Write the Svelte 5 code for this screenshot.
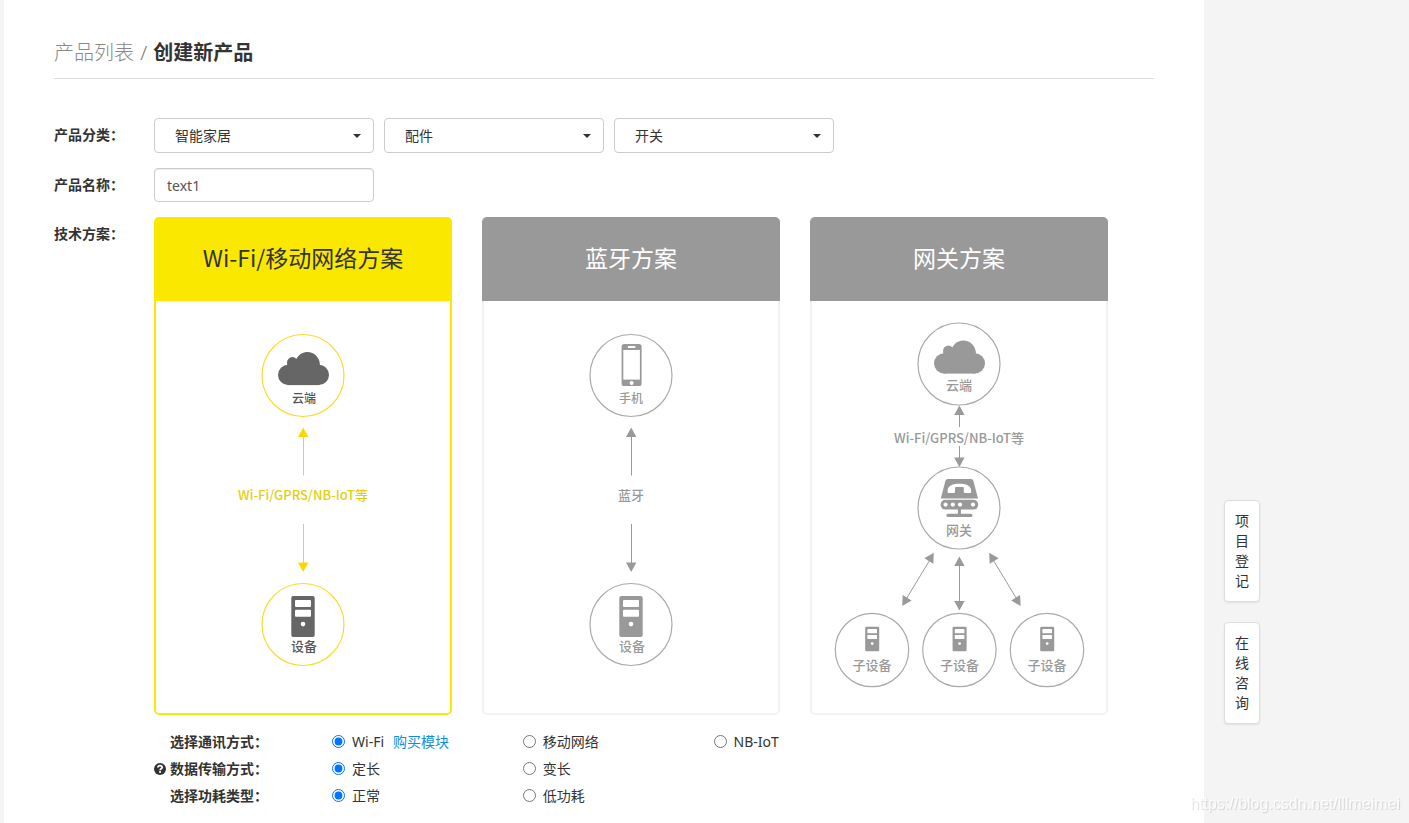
<script>
  const categories = [
    { id: 'cat-main', label: '产品大类', value: '智能家居' },
    { id: 'cat-sub', label: '产品中类', value: '配件' },
    { id: 'cat-type', label: '产品小类', value: '开关' }
  ];

  const plans = [
    { id: 'wifi', title: 'Wi-Fi/移动网络方案' },
    { id: 'ble', title: '蓝牙方案' },
    { id: 'gateway', title: '网关方案' }
  ];

  const settings = [
    { name: 'comm', label: '选择通讯方式：', help: false, options: ['Wi-Fi', '移动网络', 'NB-IoT'] },
    { name: 'transfer', label: '数据传输方式：', help: true, options: ['定长', '变长'] },
    { name: 'power', label: '选择功耗类型：', help: false, options: ['正常', '低功耗'] }
  ];

  let productName = $state('text1');
  let plan = $state('wifi');
  let chosen = $state({ comm: 'Wi-Fi', transfer: '定长', power: '正常' });
</script>

{#snippet head(x, y, angle)}
  <path class="solid" d="M0 0L5.2 9.6H-5.2Z" transform="translate({x} {y}) rotate({angle})" />
{/snippet}

{#snippet cloud(x, y)}
  <g class="icon" transform="translate({x} {y})">
    <circle cx="-15.2" cy="-0.6" r="10.2" />
    <circle cx="15.4" cy="-0.6" r="10.2" />
    <circle cx="4" cy="-11" r="12.4" />
    <circle cx="-11" cy="-13" r="5.4" />
    <rect x="-16" y="-12" width="32" height="21.6" />
  </g>
{/snippet}

{#snippet server(x, y, scale)}
  <g class="icon" transform="translate({x} {y}) scale({scale})">
    <rect x="-11.7" y="-20.5" width="23.4" height="41" rx="2" />
    <rect class="hole" x="-8" y="-16.5" width="16" height="7" rx="1" />
    <rect class="hole" x="-8" y="-6.8" width="16" height="7" rx="1" />
    <circle class="hole" cx="0" cy="7.6" r="2.3" />
  </g>
{/snippet}

<div class="page">
  <main class="panel">
    <h1 class="crumbs"><a href="#list">产品列表</a> <span>/</span> <b>创建新产品</b></h1>

    <form>
      <div class="row">
        <span class="row-label">产品分类：</span>
        <div class="selects">
          {#each categories as cat}
            <div class="select-box">
              <select id={cat.id} aria-label={cat.label}>
                <option>{cat.value}</option>
              </select>
            </div>
          {/each}
        </div>
      </div>

      <div class="row">
        <label class="row-label" for="product-name">产品名称：</label>
        <input id="product-name" class="text-input" type="text" bind:value={productName} />
      </div>

      <div class="row">
        <span class="row-label">技术方案：</span>
        <div class="content">
          <div class="plans">
            {#each plans as item}
              <button type="button" class="plan" class:active={plan === item.id} aria-pressed={plan === item.id} onclick={() => (plan = item.id)}>
                <span class="plan-title">{item.title}</span>
                <span class="plan-body">
                  <svg viewBox="2 0 294 412" aria-hidden="true">
                    {#if item.id === 'gateway'}
                      <circle class="ring" cx="149" cy="63" r="41" />
                      {@render cloud(149.4, 63)}
                      <text x="149" y="89">云端</text>
                      {@render head(149.4, 104.5, 0)}
                      <path class="line" d="M149.5 112V126M149.5 145V158" />
                      <text x="149" y="142">Wi-Fi/GPRS/NB-IoT等</text>
                      {@render head(149.4, 166, 180)}

                      <circle class="ring" cx="149" cy="207" r="41" />
                      <g class="icon" transform="translate(149.4 207)">
                        <path d="M-11.6 -29H11.6Q13.4 -29 14 -27L18.6 -9.4H-18.6L-14 -27Q-13.4 -29 -11.6 -29Z" />
                        <path class="hole" d="M-11.8 -17.5C-11.8 -22.5 -6 -24.3 0 -24.3S11.8 -22.5 11.8 -17.5V-16Q11.8 -15 10.8 -15H5.6Q4.4 -15 4.4 -16.2V-20Q4.4 -21 3.4 -21H-3.4Q-4.4 -21 -4.4 -20V-16.2Q-4.4 -15 -5.6 -15H-10.8Q-11.8 -15 -11.8 -16Z" />
                        <rect x="-18.8" y="-8.2" width="37.6" height="9.8" rx="4.8" />
                        <circle class="hole" cx="-13.8" cy="-3.4" r="2.1" />
                        <circle class="hole" cx="-6.6" cy="-3.4" r="2.1" />
                        <circle class="hole" cx="0.6" cy="-3.4" r="2.1" />
                        <circle class="hole" cx="13.6" cy="-3.4" r="2.1" />
                        <rect x="-1.5" y="1" width="3" height="5.5" />
                        <rect x="-13" y="5.8" width="26" height="3.2" rx="1.5" />
                      </g>
                      <text x="149" y="234">网关</text>

                      <path class="line" d="M121 257L95 300M149.5 262V302M182 257L208 300" />
                      {@render head(123.8, 251.8, 31)}
                      {@render head(92.2, 305, 211)}
                      {@render head(149.4, 255.5, 0)}
                      {@render head(149.4, 309.5, 180)}
                      {@render head(179.2, 251.8, -31)}
                      {@render head(210.6, 305, 149)}

                      {#each [62, 149.4, 237] as x}
                        <circle class="ring" cx={x} cy="349" r="36.7" />
                        {@render server(x + 0.2, 338, 0.6)}
                        <text {x} y="369">子设备</text>
                      {/each}
                    {:else}
                      <circle class="ring" cx="149" cy="74.5" r="41" />
                      {#if item.id === 'wifi'}
                        {@render cloud(149.4, 74.5)}
                        <text class="small dark" x="150" y="102">云端</text>
                      {:else}
                        <g class="icon" transform="translate(149.6 74.5)">
                          <rect x="-10" y="-31.5" width="20" height="42" rx="2.6" />
                          <rect class="hole" x="-8.3" y="-25.5" width="16.6" height="29.6" />
                          <rect class="hole" x="-3.8" y="-29.4" width="7.6" height="2" rx="0.6" />
                          <circle class="hole" cx="0" cy="7.4" r="2" />
                        </g>
                        <text class="small" x="149" y="102">手机</text>
                      {/if}
                      {@render head(149.2, 126.5, 0)}
                      <path class="line" d="M149.5 135V174.5M149.5 223V262" />
                      <text x="149" y="199">{item.id === 'wifi' ? 'Wi-Fi/GPRS/NB-IoT等' : '蓝牙'}</text>
                      {@render head(149.2, 271, 180)}
                      <circle class="ring" cx="149" cy="323.5" r="41" />
                      {@render server(149, 315.5, 1)}
                      <text class="dark" x="150" y="350">设备</text>
                    {/if}
                  </svg>
                </span>
              </button>
            {/each}
          </div>

          <div class="settings">
            {#each settings as row}
              <div class="setting" role="radiogroup" aria-label={row.label}>
                <span class="setting-label">
                  <span class="help">
                    {#if row.help}
                      <svg viewBox="0 0 12 12" role="img" aria-label="帮助">
                        <circle cx="6" cy="6" r="6" fill="#333" />
                        <path d="M3.9 4.6C3.9 3.2 4.8 2.6 6 2.6S8.1 3.3 8.1 4.4C8.1 5.7 6.1 5.7 6.1 7.2" fill="none" stroke="#fff" stroke-width="1.8" />
                        <rect x="5.1" y="8.1" width="1.9" height="1.7" fill="#fff" />
                      </svg>
                    {/if}
                  </span>
                  {row.label}
                </span>
                {#each row.options as option}
                  <span class="option">
                    <label>
                      <input type="radio" name={row.name} value={option} bind:group={chosen[row.name]} />
                      {option}
                    </label>
                    {#if option === 'Wi-Fi'}
                      <a href="#buy">购买模块</a>
                    {/if}
                  </span>
                {/each}
              </div>
            {/each}
          </div>
        </div>
      </div>
    </form>
  </main>

  <aside class="side">
    <button type="button">项目登记</button>
    <button type="button">在线咨询</button>
  </aside>
</div>

<div class="watermark">https://blog.csdn.net/lllmeimei</div>

<style>
  :global(body) {
    margin: 0;
    background: #f4f4f4;
    color: #333;
    font: 14px/20px "Noto Sans", "Noto Sans CJK SC", sans-serif;
  }

  .page {
    display: flex;
    min-height: 100vh;
    padding-left: 4px;
    box-sizing: border-box;
  }

  .panel {
    flex: 0 1 1200px;
    box-sizing: border-box;
    padding: 37px 50px 12px;
    background: #fff;
  }

  a {
    color: #0a8fdf;
    text-decoration: none;
  }

  .crumbs {
    margin: 0 0 39px;
    padding-bottom: 9px;
    border-bottom: 1px solid #ddd;
    font-size: 20px;
    font-weight: 300;
    line-height: 32px;
    color: #777;
  }

  .crumbs a {
    color: #888;
  }

  .crumbs span {
    margin: 0 1px;
  }

  .crumbs b {
    color: #333;
    font-weight: 700;
  }

  .row {
    display: flex;
    margin-bottom: 15px;
  }

  .row:last-child {
    margin-bottom: 0;
  }

  .row-label {
    flex: 0 0 100px;
    line-height: 34px;
    font-weight: 700;
  }

  .selects {
    display: flex;
    gap: 10px;
  }

  .select-box {
    position: relative;
    width: 220px;
  }

  .select-box::after {
    content: '';
    position: absolute;
    right: 13px;
    top: 16px;
    border: 4px solid transparent;
    border-top-color: #333;
    border-bottom: 0;
    pointer-events: none;
  }

  select,
  .text-input {
    box-sizing: border-box;
    width: 220px;
    height: 34px;
    border: 1px solid #ccc;
    border-radius: 4px;
    background: #fff;
    font: inherit;
  }

  select {
    display: block;
    width: 100%;
    height: 35px;
    padding: 0 30px 0 20px;
    appearance: none;
    color: #333;
  }

  .text-input {
    padding: 0 12px;
    box-shadow: inset 0 1px 1px rgba(0, 0, 0, 0.075);
    color: #555;
  }

  .content {
    flex: 0 1 954px;
  }

  .plans {
    display: grid;
    grid-template-columns: repeat(3, 1fr);
    gap: 30px;
  }

  .plan {
    --line: #999;
    --ring: #aaa;
    --icon: #999;
    --text: #999;
    --frame: #f2f2f2;
    display: flex;
    flex-direction: column;
    padding: 0;
    border: 0;
    border-radius: 5px;
    overflow: hidden;
    background: #fff;
    cursor: pointer;
  }

  .plan.active {
    --line: #f8d800;
    --ring: #f8dc30;
    --icon: #666;
    --text: #e3cf10;
    --frame: #fbe800;
  }

  .plan-title {
    width: 100%;
    padding-bottom: 4px;
    background: #999;
    color: #fff;
    font-family: "Noto Sans CJK SC", sans-serif;
    font-size: 23px;
    line-height: 80px;
  }

  .active .plan-title {
    background: #fbe800;
    color: #333;
  }

  .plan-body {
    display: block;
    box-sizing: border-box;
    width: 100%;
    border: 2px solid var(--frame);
    border-top: 0;
    border-radius: 0 0 5px 5px;
  }

  .plan-body svg {
    display: block;
    width: 100%;
  }

  .ring {
    fill: none;
    stroke: var(--ring);
    stroke-width: 1.2;
  }

  .line {
    fill: none;
    stroke: var(--line);
    stroke-width: 1;
  }

  .solid {
    fill: var(--line);
  }

  .icon {
    fill: var(--icon);
  }

  .hole {
    fill: #fff;
  }

  text {
    fill: var(--text);
    font-family: "Noto Sans CJK SC", sans-serif;
    font-size: 13px;
    font-weight: 500;
    text-anchor: middle;
  }

  .small {
    font-size: 12px;
  }

  .active .dark {
    fill: #555;
  }

  .settings {
    padding-top: 13px;
  }

  .setting {
    display: grid;
    grid-template-columns: 178px 20% 20% 1fr;
    line-height: 27px;
  }

  .setting-label {
    display: flex;
    font-weight: 700;
  }

  .help {
    display: flex;
    align-items: center;
    width: 16px;
  }

  .help svg {
    width: 12px;
    height: 12px;
  }

  .option {
    display: flex;
    gap: 9px;
  }

  .option label {
    display: flex;
    align-items: center;
    gap: 7px;
  }

  .option input {
    width: 13px;
    height: 13px;
    margin: 0;
  }

  .side {
    display: flex;
    flex-direction: column;
    align-self: flex-end;
    gap: 20px;
    margin-left: 20px;
    padding-bottom: 99px;
  }

  .side button {
    box-sizing: border-box;
    width: 36px;
    padding: 10px;
    border: 1px solid #ddd;
    border-radius: 4px;
    background: #fff;
    box-shadow: 0 1px 2px rgba(0, 0, 0, 0.08);
    color: #333;
    font: inherit;
    word-break: break-all;
  }

  .watermark {
    position: fixed;
    right: 9px;
    bottom: 9px;
    color: rgba(255, 255, 255, 0.8);
    font: 16px/20px "Liberation Sans", Arial, sans-serif;
    text-shadow: 1px 1px 1px rgba(0, 0, 0, 0.14);
    pointer-events: none;
  }
</style>
